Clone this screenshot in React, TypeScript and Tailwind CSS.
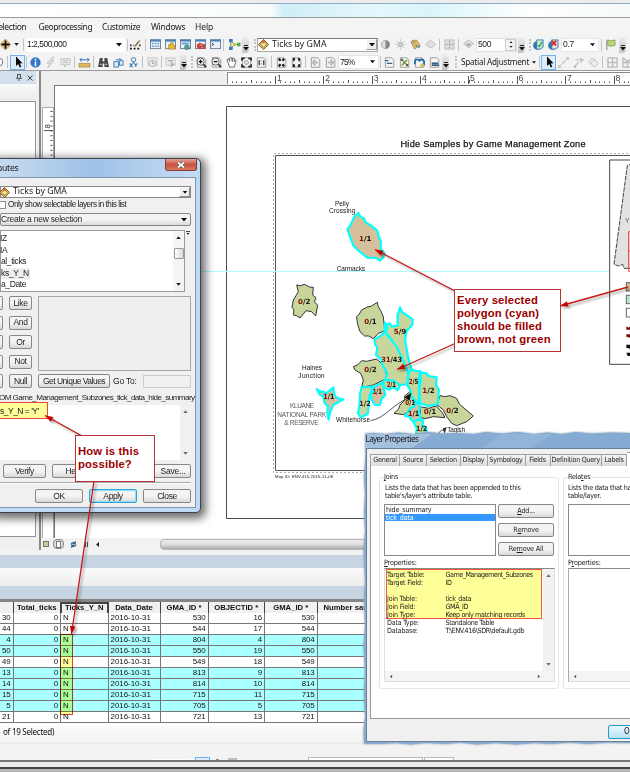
import React from "react";

type Kids = { children?: React.ReactNode; className?: string };

const Sep = () => <div className="h-3 w-px shrink-0 bg-[#c2c2c2]" />;
const Gap = ({ className = "" }: Kids) => <div className={"shrink-0 " + className} />;
const Grip = () => <div className="h-3 w-0 shrink-0 border-l-2 border-dotted border-[#c4c4c4]" />;
const Caret = ({ className = "" }: Kids) => (
  <svg viewBox="0 0 6 4" className={"h-[4px] w-[6px] shrink-0 " + className}><path d="M0 0H6L3 3.6Z" fill="#111" /></svg>
);
const Overflow = () => (
  <div className="flex h-[16px] w-[7px] shrink-0 flex-col items-center justify-end rounded-r bg-gradient-to-b from-[#eeeeee] to-[#c3c3c3] pb-[2px]">
    <div className="mb-px h-px w-[4px] bg-[#222]" />
    <Caret className="h-[3px] w-[5px]" />
  </div>
);
const Icon = ({ children }: Kids) => (
  <div className="flex w-[15px] shrink-0 justify-center">
    <svg viewBox="0 0 12 12" className="h-[11px] w-[11px] overflow-visible" fill="none">{children}</svg>
  </div>
);

const Diamond = () => (
  <>
    <path d="M6 .5L11.5 6L6 11.5L.5 6Z" fill="#e9b24c" stroke="#8c4a18" />
    <path d="M6 3L9 6L6 9L3 6Z" fill="#f8ee8e" stroke="#47916b" strokeWidth=".8" />
    <path d="M6 1L8 3L6 5L4 3Z" fill="#d8683e" />
  </>
);
const Windowed = ({ children }: Kids) => (
  <>
    <rect x=".5" y="1" width="11" height="9.5" fill="#eaf2f9" stroke="#6a7f94" />
    <rect x="0" y=".5" width="12" height="2.3" fill="#4c7fb4" />
    {children}
  </>
);
const Sheet = ({ children }: Kids) => (
  <>
    <path d="M1.5 .8H8.5L10.7 3V11.2H1.5Z" fill="#f4f4f1" stroke="#9a9a95" />
    {children}
  </>
);
const Pointer = () => <path d="M4 .5V10L6.2 8L7.7 11.6L9.3 10.8L7.8 7.5L10.5 7.2Z" fill="#080808" />;
const Selected = ({ children }: Kids) => (
  <div className="flex h-[15px] w-[15px] shrink-0 items-center justify-center border border-[#73b2ec] bg-[#dcecfb]">{children}</div>
);

const MenuBar = () => (
  <div className="flex h-[18px] shrink-0 items-center bg-[#f4f4f4] pt-px font-['Noto_Sans',sans-serif] text-[8.5px] tracking-[-0.45px] text-[#222]">
    <span className="-ml-[6px] w-[44.5px]">Selection</span>
    <span className="w-[63.5px]">Geoprocessing</span>
    <span className="w-[49px] tracking-[-0.4px]">Customize</span>
    <span className="w-[44px] tracking-[-0.3px]">Windows</span>
    <span className="tracking-[-0.1px]">Help</span>
  </div>
);

const ToolbarOne = () => (
  <div className="flex h-[17px] shrink-0 items-center overflow-hidden bg-[#f3f3f3] font-['Liberation_Sans',sans-serif] text-[8.5px] text-[#222]">
    <Gap className="-ml-[2px]" />
    <Icon><path d="M6 0L12 6L6 12L0 6Z" fill="#efc97f" stroke="#a97932" strokeWidth=".6" /><path d="M6 1.5V10.5M1.5 6H10.5" stroke="#111" strokeWidth="2" /></Icon>
    <Caret className="ml-px h-[3px]! w-[5px]!" />
    <Gap className="w-[4px]" /><Sep />
    <div className="ml-[2px] flex h-[14px] w-[99px] shrink-0 items-center justify-between bg-white pr-[3px] pl-px">
      <span className="tracking-[-0.5px]">1:2,500,000</span><Caret />
    </div>
    <Gap className="w-[2px]" /><Sep />
    <Icon><path d="M5 8L10 1L11.5 2L7 8Z" fill="#bb9256" /><path d="M3 6L5 8L9 3" stroke="#555" /><path d="M0 10.5H2M4 10.5H6M8 10.5H10M0 7H1.5M10 7H11.5" stroke="#111" strokeWidth="2" /></Icon>
    <Gap className="w-[2px]" /><Sep /><Gap className="w-[2px]" />
    <Icon><Windowed><path d="M2 5H4M5 5H7M8 5H10M2 8H4M5 8H7M8 8H10" stroke="#67a1d4" strokeWidth="1.6" /></Windowed></Icon>
    <Icon><Windowed><path d="M4 6H6V4H9V7H11V11H4Z" fill="#e7bc2a" stroke="#99752c" strokeWidth=".6" /></Windowed></Icon>
    <Icon><Windowed><path d="M2 5H10" stroke="#64a5c8" strokeWidth="2" /><circle cx="7.5" cy="9" r="2.6" fill="#5ca875" stroke="#3b7fae" strokeWidth=".8" /></Windowed></Icon>
    <Icon><Windowed><path d="M2 6L5 4L11 6V11H4L2 9Z" fill="#c0453a" /><path d="M5 6.5H8M7 9H9" stroke="#eab5a8" /></Windowed></Icon>
    <Icon><Windowed><path d="M2 4.5L4 6L2 7.5" stroke="#222" /></Windowed></Icon>
    <Sep /><Gap className="w-[3px]" />
    <Icon><path d="M2 2V10M2 2L6 6L2 10M6 6H11" stroke="#339568" /><path d="M0 0H4V3.5H0ZM0 8.5H4V12H0Z" fill="#3979b8" /><circle cx="6" cy="6" r="2" fill="#e4ba3a" /><path d="M9 4H12.5V8H9Z" fill="#4daa54" /></Icon>
    <Overflow /><Gap className="w-[5px]" /><Grip />
    <div className="ml-px flex h-[14px] w-[121px] shrink-0 items-center border border-[#a8a8a8] border-t-[#777] bg-white">
      <svg viewBox="0 0 12 12" className="mr-[3px] h-[11px] w-[11px]"><Diamond /></svg>
      <span className="flex-1 font-['Noto_Sans',sans-serif] text-[8.7px] tracking-[0.05px]">Ticks by GMA</span>
      <div className="flex h-[11px] w-[11px] items-center justify-center border border-[#999] border-t-white border-l-white bg-[#f0f0f0]"><Caret /></div>
    </div>
    <Icon><circle cx="6" cy="6" r="4.5" fill="#ddd" stroke="#aaa" /><path d="M6 1.5A4.5 4.5 0 0 1 6 10.5Z" fill="#888" /></Icon>
    <Icon><circle cx="6" cy="6" r="3" fill="#bbb" /><path d="M6 0V12M0 6H12M2 2L10 10M10 2L2 10" stroke="#ccc" /></Icon>
    <Icon><path d="M1 3L7 1L11 7L5 11Z" fill="#e6bd61" stroke="#a98b4b" /><path d="M2 1H6V5H2Z" fill="#b9a06c" /><path d="M6 7L11 9" stroke="#6d92b3" strokeWidth="2" /></Icon>
    <Icon><path d="M6 1L11.5 6L6 10L.5 6Z" fill="#e1e1e1" stroke="#bbb" /></Icon>
    <Gap className="w-px" /><Sep /><Gap className="w-[2px]" />
    <Icon><rect x="1" y="1" width="10" height="10" fill="#ddd" stroke="#bbb" /><path d="M6 2V10M2 6H10" stroke="#999" strokeDasharray="2 1" /></Icon>
    <Gap className="w-px" /><Sep /><Gap className="w-[2px]" />
    <Icon><path d="M6 1L11.5 5L6 10L.5 5Z" fill="#e1e1e1" stroke="#bbb" /><path d="M3 5H9L6 9Z" fill="#aaa" /></Icon>
    <div className="flex h-[14px] w-[41px] shrink-0 items-center justify-between border border-[#e1e1e1] bg-white pl-px">
      <span className="tracking-[-0.4px]">500</span>
      <div className="flex h-full w-[11px] flex-col items-center justify-center gap-[3px] border border-[#ccd] bg-[#f1f1f4]">
        <Caret className="h-[2px]! w-[4px]! rotate-180" /><Caret className="h-[2px]! w-[4px]!" />
      </div>
    </div>
    <Gap className="w-px" /><Overflow /><Gap className="w-[4px]" /><Grip />
    <Icon><circle cx="5" cy="7" r="4.8" fill="#2b77bb" /><path d="M4 1H11V9L8 11H4Z" fill="#cce5d0" stroke="#347fb5" /><path d="M5 7L7 8L10 3" stroke="#3fa04e" strokeWidth="1.5" /></Icon>
    <Icon><circle cx="5" cy="7" r="4.8" fill="#2b77bb" /><path d="M4 1H11V9L8 11H4Z" fill="#f1d5d5" stroke="#347fb5" /><path d="M4 2L9 7M9 2L4 7" stroke="#d32525" strokeWidth="1.8" /></Icon>
    <div className="flex h-[14px] w-[38px] shrink-0 items-center justify-between border border-[#e5e5e5] bg-white pr-[3px] pl-px"><span className="tracking-[-0.3px]">0.7</span><Caret className="w-[5px]!" /></div>
    <Gap className="w-[2px]" /><Sep /><Gap className="w-px" />
    <Icon><path d="M2 1V12" stroke="#777" /><path d="M3 1L6 2L11 1V7L7 8L3 7Z" fill="#b6d779" stroke="#738f40" strokeWidth=".7" /></Icon>
    <Gap className="w-px" /><Overflow />
  </div>
);

const Lens = ({ plus }: { plus?: boolean }) => (
  <>
    <Sheet />
    <circle cx="5" cy="5" r="4" fill="#e8eff5" stroke="#555" />
    <path d="M8 8L11 11" stroke="#333" strokeWidth="2" />
    <path d="M3 5H7" stroke="#111" strokeWidth="1.4" />
    {plus && <path d="M5 3V7" stroke="#111" strokeWidth="1.4" />}
  </>
);

const ToolbarTwo = () => (
  <div className="flex h-[17px] shrink-0 items-center overflow-hidden bg-[#f3f3f3] pt-px font-['Liberation_Sans',sans-serif] text-[8.5px] text-[#222]">
    <div className="-ml-[3px] h-[8px] w-[6px] shrink-0 rounded-sm border border-[#777] bg-white" />
    <Gap className="w-[4px]" /><Sep /><Gap className="w-[2px]" />
    <Selected><svg viewBox="0 0 12 12" className="h-3 w-3"><Pointer /></svg></Selected>
    <Gap className="w-px" /><Sep /><Gap className="w-px" />
    <Icon><circle cx="6" cy="6" r="5.5" fill="#2f75c3" stroke="#76a9da" strokeWidth=".6" /><circle cx="6" cy="3" r="1" fill="#fff" /><path d="M6 5V10" stroke="#fff" strokeWidth="1.7" /></Icon>
    <Icon><path d="M8 0L2 7H5L3 12L10 4H7L10 0Z" fill="#ddd" stroke="#bbb" strokeWidth=".7" /></Icon>
    <Icon><path d="M1 2H11V8H7L5 11V8H1Z" fill="#eee" stroke="#bbb" /><path d="M3 4H9M3 6H9" stroke="#bbb" /></Icon>
    <Gap className="w-px" /><Sep /><Gap className="w-[2px]" />
    <Icon><rect y="7" width="12" height="4" fill="#e3b65b" stroke="#987537" strokeWidth=".6" /><path d="M1 3H11M3 1L1 3L3 5M9 1L11 3L9 5" stroke="#2b62a2" /></Icon>
    <Gap className="w-px" /><Sep /><Gap className="w-[2px]" />
    <Icon><path d="M2 1H5V5H7V1H10L12 11H7V7H5V11H0Z" fill="#464646" /><path d="M2 8H4M8 8H10" stroke="#ddd" /></Icon>
    <Icon><path d="M1 5H6V11H1ZM7 4H11V9H7Z" fill="#dcecf7" stroke="#3b7bb4" /><path d="M3 3H9L7 1" stroke="#3b7bb4" /></Icon>
    <Icon><circle cx="6" cy="3" r="2.4" stroke="#3379b7" /><path d="M6 5V7M2 7L5 11M5 7L2 11M7 7L8.5 9L10 7M8.5 9V11" stroke="#3379b7" strokeWidth="1.2" /></Icon>
    <Gap className="w-px" /><Sep /><Gap className="w-[2px]" />
    <Icon><rect x="1" y="1" width="10" height="8" stroke="#c3c3c3" fill="#eee" /><circle cx="6" cy="7" r="3.5" fill="#eee" stroke="#aaa" /><path d="M6 5V7H8" stroke="#999" /></Icon>
    <Gap className="w-px" /><Sep /><Gap className="w-px" />
    <Icon><rect x="1" y="1" width="10" height="8" stroke="#c3c3c3" fill="#eee" /><path d="M3 4H9M6 5L9 8H7V11" stroke="#aaa" strokeWidth="1.3" /></Icon>
    <Gap className="w-[2px]" /><Overflow /><Gap className="w-[4px]" /><Grip /><Gap className="w-px" />
    <Icon><Lens plus /></Icon>
    <Icon><Lens /></Icon>
    <Icon><path d="M2 6L1 3L3 2L4 5V1L6 .8L7 5L7 1L9 1.5V5L10 3L11 4L9 11H4Z" fill="#fff" stroke="#666" /></Icon>
    <Icon><Sheet /><path d="M1 4V1.5H4M8 1.5H11V4M11 8V10.5H8M4 10.5H1V8" stroke="#222" strokeWidth="1.7" /><circle cx="6" cy="6" r="2" stroke="#888" /></Icon>
    <Icon><Sheet /><path d="M3.5 3.5V9M8.5 3.5V9" stroke="#333" strokeWidth="1.4" /><path d="M6 4V5M6 7V8" stroke="#3474aa" strokeWidth="1.5" /></Icon>
    <Gap className="w-[2px]" /><Sep /><Gap className="w-[2px]" />
    <Icon><Sheet /><path d="M3 2L5 4M9 2L7 4M3 10L5 8M9 10L7 8" stroke="#111" strokeWidth="2.4" /></Icon>
    <Icon><Sheet /><path d="M2 2H4.5M7.5 2H10M2 10H4.5M7.5 10H10M3 2V4.5M9 2V4.5M3 7.5V10M9 7.5V10" stroke="#222" strokeWidth="1.8" /></Icon>
    <Gap className="w-px" /><Sep /><Gap className="w-[2px]" />
    <Icon><Sheet /><path d="M9 6H3M6 3L3 6L6 9" stroke="#bbb" strokeWidth="2" /></Icon>
    <Icon><Sheet /><path d="M3 6H9M6 3L9 6L6 9" stroke="#bbb" strokeWidth="2" /></Icon>
    <div className="flex h-[14px] w-[41px] shrink-0 items-center justify-between border border-[#e5e5e5] bg-white pr-[3px] pl-px"><span className="tracking-[-0.8px]">75%</span><Caret className="w-[5px]!" /></div>
    <Gap className="w-px" /><Sep /><Gap className="w-px" />
    <Icon><Sheet><path d="M1 4H5M3 7H9" stroke="#36658e" strokeWidth="1.4" /></Sheet></Icon>
    <Icon><Sheet><path d="M3 3L9 9M9 3L3 9" stroke="#6b9b3e" strokeWidth="1.6" /><path d="M2 2H4V4H2ZM8 8H10V10H8Z" fill="#444" /></Sheet></Icon>
    <Icon><Sheet /><path d="M1 8V4Q3 1 6 4Q9 1 11 5V9" stroke="#276da7" strokeWidth="2" /><circle cx="9" cy="9" r="2" fill="#dbb85b" /></Icon>
    <Icon><Sheet><path d="M3 7H10M3 9H11" stroke="#365f85" strokeWidth="1.8" /></Sheet></Icon>
    <Overflow /><Gap className="w-[6px]" /><Grip />
    <span className="ml-[4px] w-[71px] shrink-0 font-['Noto_Sans',sans-serif] text-[8.2px] tracking-[-0.25px] whitespace-nowrap">Spatial Adjustment</span>
    <Caret className="h-[3px]! w-[4px]!" /><Gap className="w-[3px]" /><Sep /><Gap className="w-px" />
    <Selected><svg viewBox="0 0 12 12" className="h-3 w-3"><Pointer /></svg></Selected>
    <Icon><path d="M1 11L11 1" stroke="#bbb" /><path d="M0 9H3V12H0ZM9 0H12V3H9ZM5 5H7V7H5Z" fill="#c5c5c5" /></Icon>
    <Icon><path d="M2 11L6 5M3 3H10M8 1L11 3L8 6" stroke="#bbb" strokeWidth="1.3" /><path d="M1 9H3V12H1Z" fill="#bbb" /></Icon>
    <Icon><path d="M5 1L11 7L7 11L1 5ZM3 7L8 2" stroke="#b5b5b5" /></Icon>
    <Gap className="w-px" /><Sep /><Gap className="w-[2px]" />
    <Icon><path d="M1 1H11V11H1ZM6 1V11M1 6H11" stroke="#bbb" strokeWidth="1.4" /></Icon>
    <Icon><path d="M1 1L6 5L11 1V11H1ZM1 6H11M6 5V11" stroke="#bbb" strokeWidth="1.4" /></Icon>
  </div>
);

const TocPanel = () => (
  <div className="flex w-[39px] shrink-0 flex-col bg-[#f0f0f0]">
    <div className="flex h-[13px] w-[36px] shrink-0 items-center justify-end gap-[5px] bg-[#d3dfec] pr-[3px]">
      <svg viewBox="0 0 6 7" className="h-[7px] w-[6px]" fill="none" stroke="#555"><path d="M1.5 0V4M4.5 0V4M1 .5H5M0 4.3H6M3 4V7" /></svg>
      <svg viewBox="0 0 6 6" className="h-[6px] w-[6px]" stroke="#444" strokeWidth="1"><path d="M.5 .5L5.5 5.5M5.5 .5L.5 5.5" /></svg>
    </div>
    <div className="h-[17px] w-[36px] shrink-0 bg-gradient-to-b from-[#fafafa] to-[#ececec]" />
    <div className="h-[436px] w-[36px] shrink-0 border-y border-r border-[#8f959b] bg-white" />
  </div>
);

const rulerX = [277, 325.3, 373.7, 422, 470, 518.5, 567, 615.5];
const HorizontalRuler = () => (
  <svg viewBox="227 0 403 13" className="ml-auto h-[13px] w-[403px] shrink-0 bg-white">
    <path d="M227.5 13V1.5H630" fill="none" stroke="#8a8a8a" />
    {Array.from({ length: 84 }, (_, i) => (
      <rect key={i} x={Math.round(231.5 + i * 4.84)} y={i % 5 === 4 ? 9 : 10.5} width="1" height={i % 5 === 4 ? 3 : 1.5} fill="#555" />
    ))}
    {rulerX.map((x, i) => (
      <g key={x}>
        <rect x={Math.round(x - 2)} y="5" width="1" height="8" fill="#555" />
        <text x={x} y="10" fontFamily="Liberation Sans, sans-serif" fontSize="8.5" fill="#444">{i + 1}</text>
      </g>
    ))}
  </svg>
);

const VerticalRuler = () => (
  <svg viewBox="0 0 13 453" className="h-[453px] w-[13px] shrink-0 bg-[#eeeeee]">
    <rect x="1.5" y="22.5" width="11" height="431" fill="#fff" stroke="#aaa" />
    {Array.from({ length: 82 }, (_, i) => <rect key={i} x="9.5" y={26 + i * 4.84} width="2" height="1" fill="#444" />)}
    <rect x="3" y="45" width="9" height="1" fill="#555" />
    <text transform="translate(8.5 43.5) rotate(-90)" fontFamily="Liberation Sans, sans-serif" fontSize="8" fill="#333">8</text>
  </svg>
);

type Zone = { p: string; brown?: boolean; sel?: boolean };
const zones: Zone[] = [
  { p: "322,37 325,50 332,62 340,80 342,100 345,122 325,130 310,146 296,138 284,138 270,125 265,110 262,98 260,80 268,72 275,60 290,52 305,48" },
  { p: "250,230 264,224 275,212 290,214 320,207 340,225 350,255 345,268 310,285 275,292 280,270 272,250 255,240" },
  { p: "372,370 385,358 390,345 404,330 404,318 420,305 432,318 435,340 445,346 425,358 400,374" },
  { p: "450,350 476,355 490,350 500,349 517,368 525,383 490,380 465,386 452,383" },
  { p: "500,345 510,317 525,320 540,317 560,325 568,342 585,357 610,378 590,395 560,407 545,400 530,380 520,360 508,350" },
  { p: "390,52 396,66 428,88 427,105 410,122 405,150 415,205 425,240 415,248 402,220 380,175 360,143 345,127 348,105 358,100 365,110 384,106 382,80", sel: true },
  { p: "345,98 352,115 345,127 380,170 402,217 415,248 412,283 385,285 367,272 345,270 352,250 337,225 335,210 318,195 322,175 315,162 313,148 335,136 343,127", sel: true },
  { p: "425,238 435,243 450,243 447,270 448,310 445,342 425,320 422,303 412,285 416,250", sel: true },
  { p: "452,247 470,250 476,258 500,262 498,285 507,300 503,342 475,348 450,340 448,300 452,270", sel: true },
  { p: "343,270 370,272 390,286 383,300 370,292 358,299 343,292 338,280", sel: true },
  { p: "310,292 328,282 340,278 342,300 346,315 335,326 330,345 315,345 305,330 302,315 312,302", brown: true, sel: true },
  { p: "275,292 308,290 303,306 298,320 296,350 293,372 272,382 264,370 269,340 270,310", sel: true },
  { p: "405,378 420,355 432,350 440,335 450,348 447,365 452,382 435,396 424,390 418,380", brown: true, sel: true },
  { p: "430,395 445,388 460,392 457,405 470,420 467,440 437,440 440,415", sel: true },
  { p: "140,297 149,304 161,305 169,310 190,292 193,312 200,324 220,328 190,345 181,365 176,388 172,368 174,349 163,338 160,319 150,315", brown: true, sel: true },
];

const counts: [number, number, string, string, number][] = [
  [84, 43, "0", "/2", 37], [283, 102, "0", "/1", 37], [371, 133, "5", "/9", 38], [334, 217, "31", "/43", 62],
  [283, 247, "0", "/2", 37], [416, 281, "2", "/5", 29], [457, 310, "1", "/2", 37], [350, 291, "2", "/1", 28],
  [308, 313, "1", "/1", 28], [268, 349, "1", "/2", 34], [406, 345, "0", "/1", 29], [414, 377, "1", "/1", 34],
  [461, 373, "0", "/1", 38], [529, 369, "0", "/2", 37], [438, 424, "1", "/2", 34], [160, 328, "1", "/1", 33],
];

const Place = ({ x, y, w, children, gray }: { x: number; y: number; w: number; children: string; gray?: boolean }) => (
  <text x={x} y={y} textLength={w} fontSize="19.5" fill={gray ? "#555" : "#111"} fontFamily="Liberation Sans, sans-serif">{children}</text>
);

const MapCanvas = () => (
  <svg viewBox="55 86 575 452" className="h-[453px] w-[576px] shrink-0 border-t border-l border-[#777] bg-white">
    <path d="M640 106.5H226.5V518.5H640" fill="none" stroke="#4e4e4e" />
    <path d="M640 155.5H275.5V470.5H640" fill="none" stroke="#555" />
    <path d="M640 153.5H273.5V472.5H640" fill="none" stroke="#aaa" strokeDasharray="2 2" />
    <path d="M202 271.5H640" stroke="#a9ffff" />
    <text x="400.5" y="147" textLength="185" fontFamily="Liberation Sans, sans-serif" fontSize="9.2" stroke="#111" strokeWidth=".25" fill="#111">Hide Samples by Game Management Zone</text>
    <text x="275" y="478" textLength="58" fontFamily="Liberation Sans, sans-serif" fontSize="4.2" fill="#222">Map ID: ENV.416.2016-11-08</text>
    <g transform="translate(270 180) scale(.33333)">
      <polygon points="265,99 271,110 282,115 287,127 300,135 322,152 326,169 333,185 332,205 343,220 340,232 330,242 318,234 292,233 270,216 250,197 240,170 232,148 243,132 253,110" fill="#d6bf9b" stroke="#00ffff" strokeWidth="6.5" />
      <polygon points="80,315 91,317 104,313 118,321 130,322 128,345 138,353 133,365 143,376 137,408 125,395 108,392 90,414 80,407 70,405 72,390 66,382 70,360 78,347 85,335" fill="#c8d69b" stroke="#333" strokeWidth="3" />
      <text x="267" y="182" textLength="37" fontFamily="DejaVu Sans, sans-serif" fontWeight="bold" fontSize="21"><tspan fill="#850e00">1</tspan>/1</text>
      <Place x={195} y={77} w={42}>Pelly</Place>
      <Place x={177} y={100} w={79}>Crossing</Place>
      <Place x={200} y={272} w={85}>Carmacks</Place>
    </g>
    <g transform="translate(270 290) scale(.33333)">
      {zones.map((z) => (
        <polygon key={z.p} points={z.p} fill={z.brown ? "#d6bf9b" : "#c8d69b"} stroke={z.sel ? "#00ffff" : "#333"} strokeWidth={z.sel ? 6.5 : 3} strokeLinejoin="round" />
      ))}
      <path d="M302 392C345 385 365 345 414 325" fill="none" stroke="#333" strokeWidth="2.5" />
      <path d="M403 322L424 308L419 332Z" fill="#111" />
      <path d="M524 420C505 420 510 430 500 440" fill="none" stroke="#333" strokeWidth="2.5" />
      <path d="M518 415L530 412L524 432Z" fill="#333" />
      {counts.map(([x, y, a, b, w]) => (
        <text key={x + "-" + y} x={x} y={y} textLength={w} lengthAdjust="spacingAndGlyphs" fontFamily="DejaVu Sans, sans-serif" fontWeight="bold" fontSize="21.5" fill="#151515"><tspan fill="#850e00">{a}</tspan>{b}</text>
      ))}
      <Place x={96} y={241} w={60}>Haines</Place>
      <Place x={85} y={263} w={79}>Junction</Place>
      <Place x={60} y={355} w={72} gray>KLUANE</Place>
      <Place x={22} y={380} w={147} gray>NATIONAL PARK</Place>
      <Place x={43} y={404} w={103} gray>&amp; RESERVE</Place>
      <Place x={198} y={395} w={102}>Whitehorse</Place>
      <Place x={532} y={427} w={53}>Tagish</Place>
    </g>
    <g transform="translate(440 150) scale(.33333)">
      <path d="M600 30H509V643H600" fill="#fff" stroke="#444" strokeWidth="3" />
      <path d="M580 40L562 46L522 343L535 348L548 343L552 355L580 355Z" fill="#e2e2e2" stroke="#444" strokeWidth="3" strokeDasharray="14 3" />
      <text x="555" y="220" fontFamily="Liberation Sans, sans-serif" fontSize="20" fill="#555">Y</text>
      <path d="M580 245H566V364H580M566 303H580" fill="none" stroke="#f03a3a" strokeWidth="3" />
      <rect x="559" y="398" width="30" height="25" fill="#d0b78e" stroke="#666" strokeWidth="3" />
      <rect x="559" y="436" width="30" height="25" fill="#b5e8cf" stroke="#666" strokeWidth="3" />
      <rect x="559" y="475" width="30" height="26" fill="#fff" stroke="#666" strokeWidth="3" />
      <path d="M559 530H563L565 534L568 530H580V539H559ZM559 553H580V559L570 563L559 560Z" fill="#760b0b" />
      <path d="M559 584H580V594H570L568 598L565 594H559ZM559 608H580V618H563Z" fill="#111" />
    </g>
  </svg>
);

const ViewBar = () => (
  <div className="flex h-[12px] shrink-0 items-center bg-[#f2f2f2]">
    <div className="ml-[2px] flex h-[6px] w-[6px] items-center justify-center border border-[#777] bg-[#b8d5a0]" />
    <div className="ml-[4px] flex h-[10px] w-[11px] items-center justify-center rounded-sm border border-[#888] bg-[#ddd]"><div className="h-[7px] w-[5px] border border-[#777] bg-white" /></div>
    <svg viewBox="0 0 8 8" className="ml-[6px] h-[7px] w-[7px]" fill="none" stroke="#2d6693" strokeWidth="1.2"><path d="M1 4Q2 1 6 2M7 4Q6 7 2 6M6 0V3H3M2 8V5H5" /></svg>
    <div className="ml-[8px] flex gap-px"><i className="h-[5px] w-px bg-[#357]" /><i className="h-[5px] w-px bg-[#357]" /></div>
    <svg viewBox="0 0 3 5" className="ml-[8px] h-[5px] w-[3px]"><path d="M3 0V5L0 2.5Z" fill="#222" /></svg>
    <div className="ml-auto h-[11px] w-[470px] rounded-l-sm border border-[#b5b5b5] bg-gradient-to-b from-[#eeeeee] via-[#dddddd] to-[#aaaaaa]" />
  </div>
);

const heads = ["", "Total_ticks", "Ticks_Y_N", "Data_Date", "GMA_ID *", "OBJECTID *", "GMA_ID *", "Number samples"];
const rows = [
  ["30", "530", "16"], ["44", "544", "17"], ["4", "804", "4"], ["50", "550", "19"], ["49", "549", "18"],
  ["13", "813", "9"], ["14", "814", "10"], ["15", "715", "11"], ["5", "705", "5"], ["21", "721", "13"],
];
const picked = ["4", "50", "13", "14", "15", "5"];
const Num = ({ children }: Kids) => <span className="border-r border-[#777] pr-[2px] text-right tracking-[-0.15px]">{children}</span>;

const AttributeTable = () => (
  <div className="flex shrink-0 flex-col font-['Liberation_Sans',sans-serif] text-[#111]">
    <div className="h-[5px] bg-[#f3f3f3]" />
    <div className="h-[13px] bg-[#c7d4e2]" />
    <div className="h-[18px] bg-gradient-to-b from-[#fbfbfb] to-[#ededed]" />
    <div className="h-[13px] bg-[#c7d4e2]" />
    <div className="h-[3px] bg-[#858585]" />
    <div className="grid h-[11.3px] grid-cols-[13.5px_47.5px_47.5px_52px_48px_56.5px_52.5px_100px] bg-[#f0f0f0] text-center text-[7.7px] leading-[11px] font-bold">
      {heads.map((h, i) => (
        <span key={i} className={"border-b border-[#444] whitespace-nowrap " + (i === 2 ? "-ml-px border-2 border-b-[#111] leading-[8px]" : i === 7 ? "border-r pl-[6px] text-left" : "border-r")}>{h}</span>
      ))}
    </div>
    {rows.map(([a, g, o]) => (
      <div key={a} className={"grid h-[10.93px] grid-cols-[13.5px_47.5px_47.5px_52px_48px_56.5px_52.5px_1fr] border-b border-[#777] text-[7.9px] leading-[10px] " + (picked.includes(a) ? "bg-[#aaffff]" : "bg-white")}>
        <Num>{a}</Num><Num>0</Num>
        <span className="border-r border-[#777] pl-[2px]">N</span>
        <span className="border-r border-[#777] pl-[2px] whitespace-nowrap">2016-10-31</span>
        <Num>{g}</Num><Num>{o}</Num><Num>{g}</Num><span />
      </div>
    ))}
    <div className="flex h-[20px] items-center bg-gradient-to-b from-[#fdfdfd] to-[#f1f1f1] pl-[3px] font-['Noto_Sans',sans-serif] text-[8.1px] tracking-[-0.3px]">of 19 Selected)</div>
    <div className="flex h-[19px] items-end border-t border-[#e8e8e8] border-b-2 border-b-[#777] bg-[#f3f3f3]">
      <div className="ml-[150px] h-px w-[40px] bg-white" />
      <div className="ml-[5px] h-[3px] w-[15px] border border-b-0 border-[#73b2ec] bg-[#dcecfb]" />
      <div className="ml-[6px] h-px w-[3px] bg-[#888]" />
      <div className="ml-[9px] h-[2px] w-[9px] bg-[#bbb]" />
      <div className="ml-[71px] h-[3px] w-[115px] border border-b-0 border-[#bbb] bg-white" />
      <div className="ml-px h-[3px] w-[30px] border border-b-0 border-[#bbb] bg-white" />
    </div>
    <div className="h-[5px] bg-[#ededed]" />
    <div className="h-[2px] bg-[#444]" />
    <div className="h-[4px] bg-[#b7b7b7]" />
  </div>
);

const Btn = ({ children, className = "" }: Kids) => (
  <div className={"flex shrink-0 items-center justify-center rounded-[2px] border border-[#888] bg-gradient-to-b from-[#f4f4f4] from-50% to-[#d9d9d9] whitespace-nowrap " + className}>{children}</div>
);
const ScrollArrows = ({ className = "" }: Kids) => (
  <div className={"flex flex-col items-center justify-between bg-[#f1f1f1] " + className}>
    <Caret className="h-[3px]! w-[5px]! rotate-180 opacity-60" />
    <Caret className="h-[3px]! w-[5px]! opacity-60" />
  </div>
);

const SelectByAttributes = () => (
  <div className="absolute top-[158px] left-[-8px] flex h-[355px] w-[209px] flex-col rounded-[5px] border-[1.5px] border-[#39434e] bg-[#bcd9f6] pr-[4px] pb-[4px] font-['Liberation_Sans',sans-serif] text-[8.5px] tracking-[-0.4px] text-[#1c1c1c] shadow-[2px_3px_9px_3px_rgba(0,0,0,0.55)]">
    <div className="flex h-[18px] shrink-0 items-start justify-between bg-gradient-to-r from-[#c8dcf0] via-[#9fc1e6] to-[#c4dcf5] pl-[4px]">
      <span className="pt-[3px] font-['Noto_Sans',sans-serif] text-[8.7px] tracking-[-0.3px]">butes</span>
      <div className="-mr-px flex h-[12px] w-[32px] items-center justify-center rounded-b-[3px] border border-t-0 border-[#8e3a32] bg-gradient-to-b from-[#e4a49a] via-[#c8513f] to-[#d47b62]">
        <svg viewBox="0 0 8 6" className="h-[6px] w-[8px]"><path d="M1 .5L7 5.5M7 .5L1 5.5" stroke="#555" strokeWidth="3" /><path d="M1 .5L7 5.5M7 .5L1 5.5" stroke="#fff" strokeWidth="1.7" /></svg>
      </div>
    </div>
    <div className="flex min-h-0 flex-1 flex-col border border-[#8296aa] bg-[#f0f0f0] pt-[8px] pr-[4px] pl-[6px]">
      <div className="flex h-[12px] shrink-0 items-center border border-[#888] bg-white">
        <svg viewBox="0 0 12 12" className="-ml-[2px] h-[11px] w-[11px]"><Diamond /></svg>
        <span className="ml-[3px] flex-1 font-['Noto_Sans',sans-serif] text-[8.7px] tracking-[0]">Ticks by GMA</span>
        <div className="flex h-[10px] w-[11px] items-center justify-center border border-[#888] border-t-white border-l-white bg-[#eee]"><Caret className="h-[3px]!" /></div>
      </div>
      <div className="mt-[3px] flex h-[8px] shrink-0 items-center gap-[2px]"><div className="-ml-[2px] h-[8px] w-[8px] border border-[#8e8f8f] bg-white" /><span className="text-[8.2px] tracking-[-0.48px] whitespace-nowrap">Only show selectable layers in this list</span></div>
      <Btn className="mt-[4px] h-[13px] justify-between! pr-[3px]"><span className="tracking-[-0.25px]">Create a new selection</span><Caret /></Btn>
      <div className="mt-[4px] flex h-[62px] shrink-0">
        <div className="flex flex-1 border border-[#999] bg-white">
          <div className="flex flex-1 flex-col pt-[2px] leading-[11.5px]">
            <span className="-ml-px">IZ</span><span className="-ml-px">IA</span><span>al_ticks</span>
            <span className="w-[29px] bg-[#ededed] tracking-[-0.3px]">ks_Y_N</span><span>a_Date</span>
          </div>
          <div className="flex w-[11px] flex-col items-center bg-[#f4f4f4] py-[5px]">
            <Caret className="h-[3px]! w-[5px]! rotate-180" />
            <div className="mt-[9px] mb-auto h-[11px] w-[10px] rounded-[1px] border border-[#999] bg-gradient-to-r from-white to-[#d8d8d8]" />
            <Caret className="h-[3px]! w-[5px]!" />
          </div>
        </div>
        <div className="flex w-[6px] flex-col items-center gap-px pt-px"><i className="h-px w-[4px] bg-[#444]" /><Caret className="h-[2px]! w-[4px]!" /></div>
      </div>
      <div className="mt-[4px] flex h-[75px] shrink-0">
        <div className="mr-[6px] flex flex-col gap-[5.5px]">
          <Btn className="h-[14px] w-[3px] rounded-l-none border-l-0" /><Btn className="h-[14px] w-[3px] rounded-l-none border-l-0" />
          <Btn className="h-[14px] w-[3px] rounded-l-none border-l-0" /><Btn className="h-[14px] w-[3px] rounded-l-none border-l-0" />
          <Btn className="h-[14px] w-[3px] rounded-l-none border-l-0" />
        </div>
        <div className="mr-[6px] flex flex-col gap-[5.5px]">
          <Btn className="h-[14px] w-[23px]">Like</Btn><Btn className="h-[14px] w-[23px]">And</Btn><Btn className="h-[14px] w-[23px]">Or</Btn>
          <Btn className="h-[14px] w-[23px]">Not</Btn><Btn className="h-[14px] w-[23px]">Null</Btn>
        </div>
        <div className="flex-1 border border-[#a7a7a7] bg-[#efefef]" />
      </div>
      <div className="mt-[3px] flex h-[14px] shrink-0 items-center pl-[38px]">
        <Btn className="h-[14px] w-[72px] tracking-[-0.5px]">Get Unique Values</Btn>
        <span className="ml-[3px] flex-1 tracking-[-0.2px] whitespace-nowrap">Go To:</span>
        <div className="h-[13px] w-[48px] border border-[#ccc] bg-[#f0f0f0]" />
      </div>
      <span className="mt-[5px] -ml-px h-[10px] shrink-0 text-[8.1px] leading-[10px] tracking-[-0.57px] whitespace-nowrap">OM Game_Management_Subzones_tick_data_hide_summary</span>
      <div className="mt-[2px] flex h-[55px] shrink-0 justify-between bg-white">
        <div className="-mt-[3px] -ml-[6px] h-[17px] w-[54px] border border-[#e8483a] bg-[#ffff99] pl-[5px] leading-[16px] tracking-[-0.5px] whitespace-nowrap">s_Y_N = 'Y'</div>
        <ScrollArrows className="w-[11px] py-[5px]" />
      </div>
      <div className="mt-[4px] flex h-[14px] shrink-0 pl-[3px]">
        <Btn className="h-[14px] w-[43px]">Verify</Btn><Btn className="ml-[6px] h-[14px] w-[43px]">Help</Btn>
        <div className="ml-auto w-[44px]"><Btn className="h-[14px] w-[44px] pl-[8px] tracking-[-0.2px]">Save...</Btn></div>
      </div>
      <div className="mt-[4px] h-[2px] shrink-0 border-t border-[#aaa] bg-white" />
      <div className="mt-[5px] flex h-[14px] shrink-0 justify-end gap-[6px]">
        <Btn className="w-[48px]">OK</Btn><Btn className="w-[48px] border-[#2ea3d6]! shadow-[inset_0_0_1px_1px_#8bdcf5]">Apply</Btn><Btn className="w-[48px]">Close</Btn>
      </div>
    </div>
  </div>
);

const tabs: [string, string][] = [
  ["General", "w-[30px]"], ["Source", "w-[27px]"], ["Selection", "w-[33.5px]"], ["Display", "w-[27px]"],
  ["Symbology", "w-[38px]"], ["Fields", "w-[25px]"], ["Definition Query", "w-[51.5px]"], ["Labels", "w-[25px]"],
];
const joinProps: [string, string][] = [
  ["Target Table:", "Game_Management_Subzones"], ["Target Field:", "ID"], ["", ""],
  ["Join Table:", "tick_data"], ["Join Field:", "GMA_ID"], ["Join Type:", "Keep only matching records"],
  ["Data Type:", "Standalone Table"], ["Database:", "T:\\ENV.416\\SDR\\default.gdb"],
];

const JoinGroup = () => (
  <div className="flex h-[212px] w-[180px] shrink-0 flex-col rounded-[3px] border border-[#dce6ee] px-[4px]">
    <span className="-mt-[6px] h-[10px] shrink-0 self-start bg-white pr-[2px] leading-[10px]"><u>J</u>oins</span>
    <div className="mt-[2px] h-[20px] shrink-0 pl-px leading-[8px] tracking-[-0.27px] whitespace-nowrap">Lists the data that has been appended to this<br />table's/layer's attribute table.</div>
    <div className="flex h-[52px] shrink-0 gap-[2px]">
      <div className="w-[113px] border border-[#888] bg-white pt-px leading-[7.6px]"><div className="pl-px">hide_summary</div><div className="bg-[#3399ff] pl-px text-white">tick_data</div></div>
      <div className="flex flex-col gap-[5px]"><Btn className="h-[14px] w-[56px]"><u>A</u>dd...</Btn><Btn className="h-[14px] w-[56px]">R<u>e</u>move</Btn><Btn className="h-[14px] w-[56px]">Re<u>m</u>ove All</Btn></div>
    </div>
    <span className="mt-px h-[11px] shrink-0 leading-[11px]"><u>P</u>roperties:</span>
    <div className="flex h-[114px] w-[171px] shrink-0 flex-col border border-[#ddd] border-t-[#888] bg-white">
      <div className="flex flex-1">
        <div className="relative flex-1 pt-[2px] pl-[2px] text-[7.1px] leading-[8px] tracking-[-0.37px]">
          <div className="absolute top-0 left-px h-[50px] w-[156px] border border-[#f05a3c] bg-[#ffff99]" />
          {joinProps.map(([k, v], i) => <div key={i} className="relative flex h-[8px] whitespace-nowrap"><span className="w-[58.5px] tracking-[-0.2px]">{k}</span><span className={v.startsWith("Game") ? "tracking-[-0.46px]" : ""}>{v}</span></div>)}
        </div>
        <ScrollArrows className="w-[11px] py-[5px]" />
      </div>
      <div className="flex h-[10px] items-center justify-between bg-[#f0f0f0] pr-[13px] pl-[4px] opacity-70"><Caret className="h-[3px]! w-[4px]! rotate-90" /><Caret className="h-[3px]! w-[4px]! -rotate-90" /></div>
    </div>
  </div>
);

const RelateGroup = () => (
  <div className="flex h-[212px] w-[100px] shrink-0 flex-col rounded-[3px] border border-[#dce6ee] px-[4px]">
    <span className="-mt-[6px] h-[10px] shrink-0 self-start bg-white pr-[2px] leading-[10px]">Rela<u>t</u>es</span>
    <div className="mt-[2px] h-[20px] shrink-0 leading-[8px] tracking-[-0.27px] whitespace-nowrap">Lists the data that has<br />table/layer.</div>
    <div className="h-[52px] shrink-0 border border-[#888]" />
    <span className="mt-px h-[11px] shrink-0 leading-[11px]">P<u>r</u>operties:</span>
    <div className="flex h-[114px] shrink-0 flex-col justify-end border border-[#ddd] border-t-[#888] border-l-[#aaa]">
      <div className="flex h-[10px] items-center bg-[#f0f0f0] pl-[4px] opacity-70"><Caret className="h-[3px]! w-[4px]! rotate-90" /></div>
    </div>
  </div>
);

const LayerProperties = () => (
  <div className="absolute top-[431px] left-[362px] flex h-[316px] w-[268px] flex-col overflow-hidden pt-[17px] pl-[4px] font-['DejaVu_Sans_Condensed','DejaVu_Sans',sans-serif] text-[7.2px] tracking-[-0.2px] text-[#1a1a1a]">
    <svg viewBox="0 0 268 316" className="absolute inset-0 h-[316px] w-[268px] drop-shadow-[0_0_1px_#89a]">
      <path d="M3 2.5L12 2L24 3L36 1.5L52 3L66 1L80 2.5L98 2L112 3L124 1L140 2.5L156 1L172 3L186 1.5L200 3L214 1L230 2.5L250 1.5L268 2V312L245 311.5L226 313L208 311.5L190 313L172 312L154 313.5L134 312L115 313.5L98 311.5L84 313L64 312L48 313.5L34 312L20 313L2 313L1.5 300L3 286L2 262L3 240L1.5 215L3 194L2 170L3 150L1.5 120L3 100L2 82L3 64L2 46L3.5 24Z" fill="#86abd3" />
      <path d="M3 3H70L50 17H3Z" fill="#a4c0df" /><path d="M140 3H190L170 17H120Z" fill="#93b4d9" />
    </svg>
    <span className="absolute top-[2px] left-[3.5px] font-['Noto_Sans',sans-serif] text-[8px] leading-[12px] tracking-[-0.55px]">Layer Properties</span>
    <div className="relative flex h-[294px] w-[264px] shrink-0 flex-col border-t border-b border-l border-[#6c7f95] bg-[#f0f0f0] pl-[3px]">
      <div className="flex h-[17px] shrink-0 items-end">
        {tabs.map(([t, w]) => <div key={t} className={"flex h-[12px] shrink-0 items-center justify-center border border-b-0 border-l-0 border-[#a0a0a0] bg-gradient-to-b from-[#f4f4f4] to-[#dcdcdc] text-[7.1px] tracking-[-0.25px] whitespace-nowrap first:border-l " + w}>{t}</div>)}
        <div className="h-[14px] flex-1 border-t border-[#a0a0a0] bg-white" />
      </div>
      <div className="flex h-[253px] shrink-0 gap-[4px] overflow-hidden border-b border-l border-[#999] bg-white pt-[11px] pl-[8px]">
        <JoinGroup />
        <RelateGroup />
      </div>
      <div className="mt-[6px] -mr-[10px] ml-[238px] flex h-[14px] w-[48px] shrink-0 items-center rounded-[2px] border border-[#249ad0] bg-gradient-to-b from-[#e9f8fe] to-[#b9e2f5] pl-[15px] text-[8px]">OK</div>
    </div>
  </div>
);

const Arrow = ({ x1, y1, x2, y2 }: { x1: number; y1: number; x2: number; y2: number }) => {
  const a = (Math.atan2(y2 - y1, x2 - x1) * 180) / Math.PI;
  return (
    <g>
      <line x1={x1} y1={y1} x2={x2} y2={y2} stroke="#c51616" strokeWidth="1.3" />
      <path d="M0 0L-8 -2.8V2.8Z" fill="#c80000" transform={`translate(${x2} ${y2}) rotate(${a})`} />
    </g>
  );
};

const Annotations = () => (
  <>
    <div className="absolute top-[634px] left-[60px] h-[81px] w-[13px] border border-[#e8402c] bg-[#ffff99] mix-blend-multiply" />
    <svg viewBox="0 0 630 772" className="absolute inset-0 h-[772px] w-[630px] drop-shadow-[2px_2px_1px_rgba(0,0,0,0.35)]">
      <Arrow x1={455} y1={291} x2={375} y2={249.5} />
      <Arrow x1={455} y1={343.5} x2={397} y2={369.5} />
      <Arrow x1={628} y1={287} x2={560} y2={306} />
      <Arrow x1={82} y1={436} x2={45} y2={415.5} />
      <Arrow x1={94} y1={481} x2={71.5} y2={634} />
    </svg>
    <div className="absolute top-[289px] left-[454px] h-[63px] w-[107px] border border-[#b93434] bg-white pt-[4px] pl-[2px] font-['Liberation_Sans',sans-serif] text-[11.3px] leading-[13px] font-bold tracking-[0.13px] whitespace-nowrap text-[#9c0000]">
      Every selected<br />polygon (cyan)<br />should be filled<br />brown, not green
    </div>
    <div className="absolute top-[435px] left-[75px] h-[47px] w-[80px] border border-[#b93434] bg-white pt-[9px] pl-[2px] font-['Liberation_Sans',sans-serif] text-[11.3px] leading-[13px] font-bold tracking-[0.13px] whitespace-nowrap text-[#9c0000]">
      How is this<br />possible?
    </div>
  </>
);

export default function App() {
  return (
    <div className="relative flex h-[772px] w-[630px] flex-col overflow-hidden bg-[#f0f0f0]">
      <div className="h-[4px] shrink-0 border-b border-[#8eabc8] bg-[#ededed]" />
      <div className="h-[14px] shrink-0 border-b border-[#999] bg-[linear-gradient(90deg,#fff_0,#f9fcfd_43%,#cfeef7_45%,#e4f8fc_60%,#d8f5fa_68%,#fff_84%,#f5fafb_100%)]" />
      <MenuBar />
      <ToolbarOne />
      <ToolbarTwo />
      <div className="h-px shrink-0 bg-[#999]" />
      <div className="flex h-[479px] shrink-0">
        <TocPanel />
        <div className="flex w-[591px] shrink-0 flex-col border-l-2 border-[#888]">
          <div className="flex h-[14px] shrink-0 bg-[#eeeeee]"><HorizontalRuler /></div>
          <div className="flex h-[453px] shrink-0"><VerticalRuler /><MapCanvas /></div>
          <ViewBar />
        </div>
      </div>
      <AttributeTable />
      <SelectByAttributes />
      <LayerProperties />
      <Annotations />
    </div>
  );
}
